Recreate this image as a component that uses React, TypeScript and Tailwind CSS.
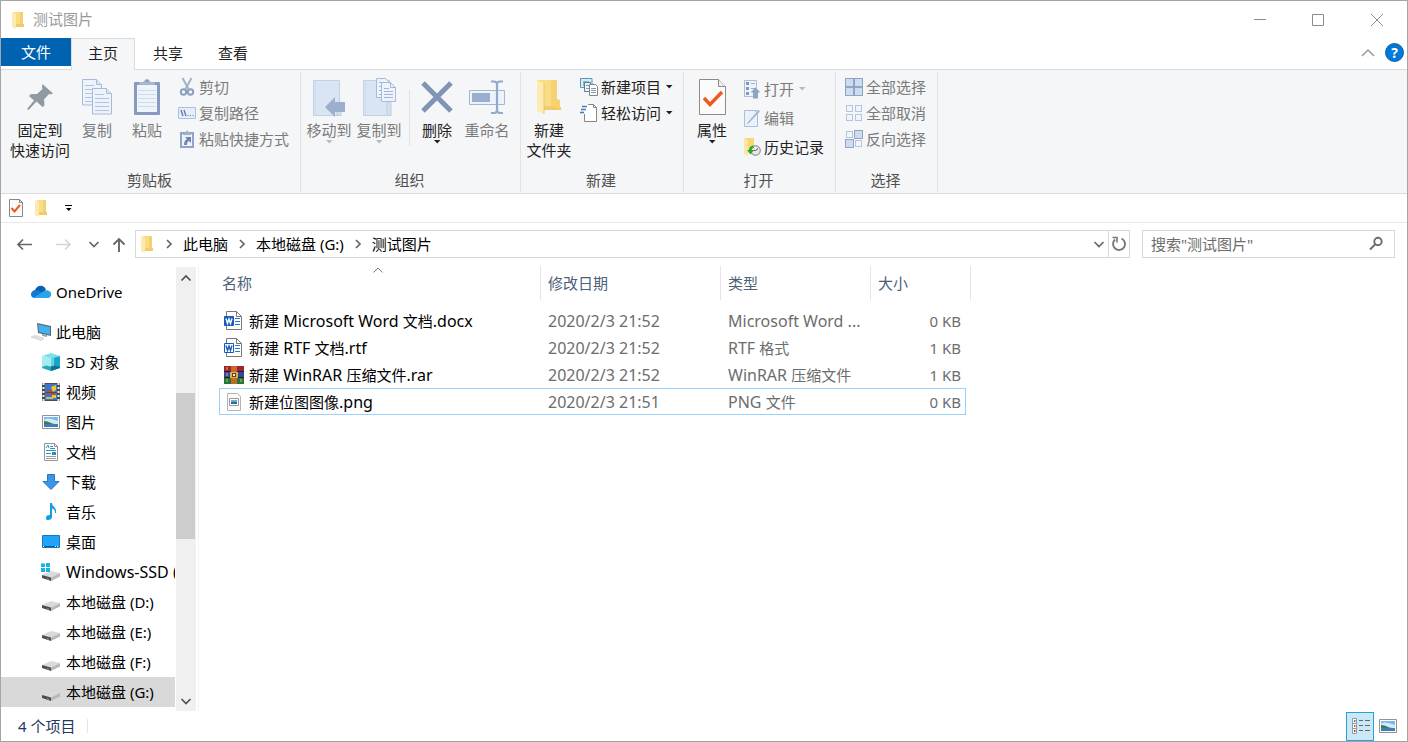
import React from "react";

type Kids = { children: React.ReactNode };
type IconProps = { w: number; h: number; children: React.ReactNode };

function Icon({ w, h, children }: IconProps) {
  return (
    <svg width={w} height={h} viewBox={`0 0 ${w} ${h}`} fill="none" className="shrink-0" aria-hidden="true">
      {children}
    </svg>
  );
}

/* Latin runs are set one size larger than the Chinese text around them. */
function Mixed({ text }: { text: string }) {
  return (
    <span className="whitespace-pre">
      {text.split(/([\x20-\x7e]+)/).map((run, i) =>
        i % 2 ? <span key={i} className="text-[16px] leading-5">{run}</span> : run
      )}
    </span>
  );
}

/* ---------- shared glyphs ---------- */

const FolderIcon = () => (
  <Icon w={14} h={18}>
    <path d="M3 1h9v13H3z" fill="#f9dc84" />
    <path d="M9 1h3v14H9z" fill="#f4d070" />
    <path d="M5 13h8v3H5z" fill="#f2cb66" />
    <path d="M1 1l4 2v15l-4-2z" fill="#fdeab0" />
  </Icon>
);

const BigFolderIcon = () => (
  <Icon w={28} h={38}>
    <path d="M2 2h20v29H2z" fill="#f9dc84" />
    <path d="M16 2h6v28h-6z" fill="#f5d272" />
    <path d="M8 28l18 1v3H8z" fill="#f1cb69" />
    <path d="M22 21l3 1v8h-3z" fill="#f5d272" />
    <path d="M2 2l7 4v30l-7-3z" fill="#fdebb3" />
    <path d="M9 6v30" stroke="#eac76b" />
  </Icon>
);

const Caret = ({ tone = "#222222" }: { tone?: string }) => (
  <Icon w={7} h={4}>
    <path d="M0 0h6.500L3.250 3.500z" fill={tone} />
  </Icon>
);

const CheckPage = () => (
  <Icon w={16} h={20}>
    <path d="M1.500 1.500h10l3 3v14h-13z" fill="#fafafa" stroke="#878787" />
    <path d="M11.500 1.500v3h3" stroke="#878787" />
    <path d="M3.500 10l3 3.500L12 7" stroke="#ee5a1c" strokeWidth="2" />
  </Icon>
);

const Chevron = ({ dir, tone = "#666666" }: { dir: "up" | "down" | "right"; tone?: string }) => (
  <Icon w={12} h={12}>
    <path
      d={dir === "up" ? "M1.500 8.500L6 4l4.500 4.500" : dir === "down" ? "M1.500 4L6 8.500 10.500 4" : "M4 2l4 4-4 4"}
      stroke={tone}
      strokeWidth="1.700"
    />
  </Icon>
);

/* ---------- ribbon icons ---------- */

const PinIcon = () => (
  <Icon w={28} h={28}>
    <path d="M16.500 1L27 10.500l-2.500 1-1.500-.5-5 5.500.5 6-2 1.500-6-5.500L2.500 27 1 26l7-8.500L3 13l2-2h6l5.500-5-.5-2z" fill="#8f9aa3" />
  </Icon>
);

const Sheet = ({ x, y }: { x: number; y: number }) => (
  <g>
    <path d={`M${x + 0.5} ${y + 0.5}h14l5 5v20.500h-19z`} fill="#edf3fc" stroke="#a9b9d6" />
    <path d={`M${x + 14.5} ${y + 0.5}v5h5`} fill="#dbe5f4" stroke="#a9b9d6" />
    <path d={`M${x + 3} ${y + 6.5}h9M${x + 3} ${y + 10.5}h14M${x + 3} ${y + 14.5}h14M${x + 3} ${y + 18.5}h14M${x + 3} ${y + 22.5}h14`} stroke="#b2c3de" />
  </g>
);

const CopyIcon = () => (
  <Icon w={32} h={37}>
    <Sheet x={1} y={0} />
    <Sheet x={11} y={9} />
  </Icon>
);

const ClipboardIcon = () => (
  <Icon w={28} h={38}>
    <rect x="1" y="4" width="26" height="33" rx="1" fill="#879bc0" />
    <path d="M4 7h20v27H4z" fill="#eef4fc" />
    <path d="M5 12.500h18M5 16.500h18M5 20.500h18M5 24.500h18M5 28.500h18" stroke="#cfdbea" />
    <path d="M6 7V4h4c1 0 1.500-3 4-3s3 3 4 3h4v3z" fill="#a8b5cc" />
    <circle cx="14" cy="3" r="1.200" fill="#8797b5" />
  </Icon>
);

const ScissorsIcon = () => (
  <Icon w={18} h={20}>
    <path d="M4.500 1l6 11M13.500 1l-6 11" stroke="#a3b1c8" strokeWidth="2" />
    <circle cx="5.500" cy="15" r="2.700" stroke="#8b9fc0" strokeWidth="2" />
    <circle cx="12.500" cy="15" r="2.700" stroke="#8b9fc0" strokeWidth="2" />
  </Icon>
);

const PathIcon = () => (
  <Icon w={18} h={12}>
    <path d="M.5.5h17v11H.5z" fill="#e6eef9" stroke="#aebfda" />
    <path d="M3 3l2 6M6 3l2 6" stroke="#61789f" strokeWidth="1.300" />
    <path d="M9.500 8.500h1M12 8.500h1M14.500 8.500h1" stroke="#61789f" />
  </Icon>
);

const PasteLinkIcon = () => (
  <Icon w={18} h={20}>
    <path d="M2 3h14v16H2z" fill="#91a4c6" />
    <path d="M4 5h10v12H4z" fill="#edf3fb" />
    <path d="M5 4h2l2-3 2 3h2v2H5z" fill="#a3b1c8" />
    <path d="M7 8h6v6l-2-2c-2 1-2 2-2 4H6c0-3 1-5 3-6z" fill="#6f87b0" />
  </Icon>
);

const Book = () => (
  <g>
    <path d="M1.500 2.500h26v35h-26z" fill="#dae5f4" stroke="#c3d1e6" />
    <path d="M3.500 3v34" stroke="#cfdcee" />
    <path d="M25 26c1-3 4-3 4 0v11.500h-4z" fill="#d3e0f1" stroke="#bccce2" />
  </g>
);

const MoveToIcon = () => (
  <Icon w={34} h={39}>
    <Book />
    <path d="M13 29l10-10v5h10v10H23v5z" fill="#9cafcf" />
  </Icon>
);

const CopyToIcon = () => (
  <Icon w={34} h={39}>
    <Book />
    <path d="M14.500.5h9l4 4v15h-13z" fill="#edf3fc" stroke="#a9b9d6" />
    <path d="M19.500 4.500h9l5 5v14h-14z" fill="#edf3fc" stroke="#a9b9d6" />
    <path d="M28.500 4.500v5h5M22 10.500h5M22 13.500h9M22 16.500h9M22 19.500h9M17 4.500h5M17 8.500h2M17 12.500h2M17 16.500h2" stroke="#a3b5d3" />
  </Icon>
);

const DeleteIcon = () => (
  <Icon w={34} h={34}>
    <path d="M3 3l28 28M31 3L3 31" stroke="#8194b6" strokeWidth="5" />
  </Icon>
);

const RenameIcon = () => (
  <Icon w={38} h={36}>
    <path d="M1.500 11.500h35v14h-35z" fill="#edf3fc" stroke="#a5b6d3" />
    <path d="M4 14h18v9H4z" fill="#9caecd" />
    <path d="M29 4v28M23 2.500h3q3 0 3 3 0-3 3-3h3M23 34h3q3 0 3-3 0 3 3 3h3" stroke="#95a8c9" strokeWidth="2.200" />
  </Icon>
);

const NewItemIcon = () => (
  <Icon w={18} h={18}>
    <path d="M.5.500h11.500v9H.5z" fill="#d5edf8" stroke="#5b97b5" />
    <path d="M3 3h6v5H3z" fill="#8fb9ac" />
    <path d="M4.500 4.500h6v9h-6z" fill="#eef4f8" stroke="#5d7c91" />
    <path d="M9.500 6.500h6l2 2v9h-8z" fill="#fff" stroke="#7d858c" />
    <path d="M11 10.500h5M11 12.500h5M11 14.500h5M6 7.500h3M6 10.500h3" stroke="#8e9aa3" />
  </Icon>
);

const EasyAccessIcon = () => (
  <Icon w={18} h={20}>
    <path d="M4.500 1.500h9l3 3v14h-12z" fill="#fff" />
    <path d="M8 1.500h5.500l3 3v14h-12V11M13.500 1.500v3h3" stroke="#878787" />
    <path d="M2 3.500h5M1 6.500h5M0 9.500h4" stroke="#3c7fbb" strokeWidth="1.400" />
  </Icon>
);

const PropertiesIcon = () => (
  <Icon w={29} h={38}>
    <path d="M1.500 1.500h19l7 7v28h-26z" fill="#fbfbfb" stroke="#8b8b8b" />
    <path d="M20.500 1.500v7h7" fill="#eee" stroke="#8b8b8b" />
    <path d="M6 20l6 6.500L24 14" stroke="#ee5a1c" strokeWidth="3.400" />
  </Icon>
);

const OpenIcon = () => (
  <Icon w={18} h={20}>
    <path d="M1.500 1.500h12v16h-12z" fill="#edf3fb" stroke="#aebdd6" />
    <path d="M3 3h3v3H3zM3 8h3v3H3zM3 13h3v3H3z" fill="#8398bd" />
    <path d="M8 4.500h4M8 9.500h4" stroke="#9cafcd" />
    <path d="M12.500 8.500l5 5H15v6h-5v-6H7.500z" fill="#8fa3c6" />
  </Icon>
);

const EditIcon = () => (
  <Icon w={18} h={20}>
    <path d="M1.500 2.500h13v16h-13z" fill="#e9f1fb" stroke="#aebdd6" />
    <path d="M15.500 2l1.500 1.500L6 15l-2.500 1.500L5 14z" fill="#a4b6d2" />
    <path d="M11.500 2.500l3 3" stroke="#aebdd6" />
  </Icon>
);

const HistoryIcon = () => (
  <Icon w={18} h={20}>
    <path d="M2 1h9v15H2z" fill="#f7d678" />
    <path d="M1 1l4 2v16l-4-2z" fill="#fde7a3" />
    <circle cx="12.500" cy="13.500" r="4.800" fill="#e5e8e6" stroke="#777d78" />
    <path d="M12.500 13.500l2.500-2M12.500 13.500h-2" stroke="#555" />
    <path d="M10 8.500c-3 .5-4 2.500-4 4.500H4l3.500 4.500L11 13H9c0-1.500.5-2 2-2.500z" fill="#2ea836" />
  </Icon>
);

const Cells = ({ solid }: { solid: boolean[] }) => (
  <Icon w={18} h={18}>
    {solid.map((on, i) => (
      <rect
        key={i}
        x={(i % 2) * 9 + (on ? 0.5 : 1.5)}
        y={(i > 1 ? 9 : 0) + (on ? 0.5 : 1.5)}
        width={on ? 8 : 6}
        height={on ? 8 : 6}
        fill={on ? "#cfdcee" : "#f0f5fc"}
        stroke={on ? "#8fa4c6" : "#b6c5de"}
      />
    ))}
  </Icon>
);

/* ---------- navigation icons ---------- */

const OneDriveIcon = () => (
  <Icon w={22} h={16}>
    <path d="M5 6C7 1 14 0 16 6l-5 4z" fill="#0a5fb4" />
    <path d="M5 14c-6 0-5-8 1-8 3 0 5 2 8 4l-4 4z" fill="#1378d1" />
    <path d="M4 13.500L14 7c4-2 8 1 7 4.500-.5 1.500-1.500 2.500-3 2.500H5z" fill="#2aa4ea" />
  </Icon>
);

const ComputerIcon = () => (
  <Icon w={22} h={20}>
    <path d="M7 1l14 3v10L8 11z" fill="#5b6770" />
    <path d="M8 2.500l12 2.500v7.500L9 10z" fill="#3fb2f5" />
    <path d="M12 12l5 1v2l-5-1z" fill="#9da5ab" />
    <path d="M1 15l4-1.500 9 3-3 2z" fill="#e0e3e5" stroke="#b9bec2" strokeWidth=".5" />
  </Icon>
);

const CubeIcon = () => (
  <Icon w={20} h={20}>
    <path d="M10 1l9 3-9 2.500L1 4z" fill="#7fdfe9" />
    <path d="M1 4l9 2.500V19l-9-3z" fill="#a3ecf2" />
    <path d="M19 4l-9 2.500V19l9-3z" fill="#17a5d0" />
    <path d="M10 6.500l3-1v9l-3 .5z" fill="#64d2e0" />
    <path d="M1 15l4-1.500 5 1V19l-9-3z" fill="#2aa9bd" />
    <path d="M10 14.500l4-1 5 1.500v1l-9 3z" fill="#126f93" />
  </Icon>
);

const FilmIcon = () => (
  <Icon w={20} h={20}>
    <path d="M1 1h18v18H1z" fill="#4a4a4a" />
    <path d="M4 2h12v8H4zM4 11h12v7H4z" fill="#3b76cc" />
    <path d="M10 5l5-2v5l-3 2zM11 13h4v3h-4z" fill="#f0c52d" />
    <path d="M5 8h6v2H5zM10 11h4v2h-4z" fill="#c84236" />
    <path d="M5 15h7v2H5z" fill="#d8bd42" />
    <path d="M2.500 1v18M17.500 1v18" stroke="#f1f1f1" strokeWidth="2" strokeDasharray="2 2" />
  </Icon>
);

const PictureIcon = () => (
  <Icon w={20} h={16}>
    <path d="M1.500 1.500h17v13h-17z" fill="#fff" stroke="#929292" />
    <path d="M3 3h14v10H3z" fill="#78b8eb" />
    <path d="M3 6c4-3 7-1 14 1v3H3z" fill="#d2eaf5" />
    <path d="M3 7c5 0 7 3 11 3H3z" fill="#3d775e" />
    <path d="M3 10h14v3H3z" fill="#3e7fb5" />
  </Icon>
);

const DocumentIcon = () => (
  <Icon w={20} h={20}>
    <path d="M3.500 1.500h10l3 3v14h-13z" fill="#fff" stroke="#949494" />
    <path d="M13.500 1.500v3h3" stroke="#949494" />
    <path d="M5 6l2-3 1 3M9 4.500h3M9 6.500h5M5 8.500h10M5 11.500h5" stroke="#2995cb" />
    <path d="M11 10h4v3h-4z" fill="#3983b8" />
    <path d="M5 14.500h10M5 16.500h10" stroke="#9a9a9a" />
  </Icon>
);

const DownloadIcon = () => (
  <Icon w={20} h={20}>
    <path d="M6.500 2.500h7v7h4.500L10 17.500 2 9.500h4.500z" fill="#3e95e5" stroke="#2876c0" />
  </Icon>
);

const MusicIcon = () => (
  <Icon w={20} h={20}>
    <path d="M9 1h2c0 4 5 4 4 10h-1c0-3-1-4-3-4.500V15c0 4-7 4-6 .5C5.500 13 8 13 9 13z" fill="#149bea" />
  </Icon>
);

const DesktopIcon = () => (
  <Icon w={20} h={16}>
    <path d="M1.500 1.500h17v12h-17z" fill="#22a3f5" stroke="#1479c3" />
    <path d="M3 12.500h14" stroke="#0c558e" />
    <path d="M2 12.500h1M14 12.500h1M16 12.500h1" stroke="#fff" />
  </Icon>
);

const DriveIcon = ({ windows = false }: { windows?: boolean }) => (
  <Icon w={20} h={20}>
    <path d="M1 13l9-4 9 2-9 4.500z" fill="#dadada" />
    <path d="M19 11v3.500L10 19v-3.500z" fill="#b9b9b9" />
    <path d="M1 13l9 2.500V19l-9-3z" fill="#4d4d4d" />
    <path d="M6 16l2 .7v1L6 17z" fill="#38d447" />
    {windows && <path d="M0 1.500h4v3.500H0zM5 1h4v4H5zM0 6h4v4H0zM5 6h4v4H5z" fill="#18b2e9" />}
  </Icon>
);

/* ---------- file icons ---------- */

const WordIcon = ({ outlined = false }: { outlined?: boolean }) => (
  <Icon w={20} h={20}>
    <path d="M2.500.500v18h15V5.500l-5-5z" fill="#fff" stroke="#777" />
    <path d="M12.500.500v5h5" stroke="#777" />
    <path d="M11 7.500h5M11 10.500h5M11 13.500h5" stroke="#2d78c9" />
    <path d="M.500 5.500h9v9h-9z" fill={outlined ? "#fff" : "#185abd"} stroke="#185abd" />
    <path d="M2 7.500l1.500 5L5 8l1.500 4.500 1.500-5" stroke={outlined ? "#185abd" : "#fff"} strokeWidth="1.400" />
  </Icon>
);

const RarIcon = () => (
  <Icon w={20} h={20}>
    <path d="M0 1h20v6H0z" fill="#a32230" />
    <path d="M0 7h20v6H0z" fill="#37459f" />
    <path d="M0 13h20v6H0z" fill="#21783a" />
    <path d="M0 6.500h20M0 12.500h20" stroke="#271d2f" />
    <path d="M7 1h6v18H7z" fill="#c06c2d" />
    <path d="M6 7h8v6H6z" fill="#e0ad4b" />
    <path d="M8 8h4v4H8z" fill="#653d25" />
    <path d="M9 9h2v2H9z" fill="#fff0c1" />
    <path d="M3 2v3M3 8v3M3 14v3M17 14v3" stroke="#e4bb55" />
  </Icon>
);

const ImageFileIcon = () => (
  <Icon w={20} h={20}>
    <path d="M3.500 1.500h10l3 3v14h-13z" fill="#fafafa" stroke="#b5b5b5" />
    <path d="M5.500 6.500h9v7h-9z" fill="#fff" stroke="#999" />
    <path d="M7 8h6v4H7z" fill="#68a9dc" />
    <path d="M7 10h6v2H7z" fill="#346c8c" />
  </Icon>
);

/* ---------- ribbon ---------- */

function Group({ label, width, children }: Kids & { label: string; width: string }) {
  return (
    <section aria-label={label} className={`flex flex-col border-r border-[#e0e2e4] ${width}`}>
      <div className="flex h-[94px] pt-0.5">{children}</div>
      <div className="pt-1 pr-0.5 text-center leading-5 text-[#505050]">{label}</div>
    </section>
  );
}

type BigProps = { icon: React.ReactNode; lines: string[]; off?: boolean; drop?: boolean; width?: string };
function Big({ icon, lines, off, drop, width = "w-[50px]" }: BigProps) {
  return (
    <button disabled={off} className={`flex shrink-0 flex-col items-center ${width} ${off ? "text-[#7b7b7b]" : "text-[#222222]"}`}>
      <span className="flex h-[46px] items-center">{icon}</span>
      {lines.map((line) => (
        <span key={line} className="leading-5 whitespace-nowrap">{line}</span>
      ))}
      {drop && <Caret tone={off ? "#b9b9b9" : "#222222"} />}
    </button>
  );
}

function Small({ icon, label, off, drop }: { icon: React.ReactNode; label: string; off?: boolean; drop?: boolean }) {
  return (
    <button disabled={off} className={`flex items-center gap-[3px] leading-5 whitespace-nowrap ${off ? "text-[#7b7b7b]" : "text-[#222222]"}`}>
      <span className="flex w-[18px] justify-center">{icon}</span>
      {label}
      {drop && <span className="pl-0.5"><Caret tone={off ? "#b9b9b9" : "#222222"} /></span>}
    </button>
  );
}

const Stack = ({ children }: Kids) => <div className="flex h-[78px] flex-col justify-around">{children}</div>;

function Ribbon() {
  return (
    <div className="flex h-[124px] border-b border-[#dadbdc] bg-[#f5f6f7] pt-0.5 pb-px">
      <Group label="剪贴板" width="w-[300px]">
        <div className="flex pl-[7px]">
          <Big icon={<PinIcon />} lines={["固定到", "快速访问"]} width="w-16" />
          <Big icon={<CopyIcon />} lines={["复制"]} off />
          <Big icon={<ClipboardIcon />} lines={["粘贴"]} off />
        </div>
        <div className="pl-1.5">
          <Stack>
            <Small icon={<ScissorsIcon />} label="剪切" off />
            <Small icon={<PathIcon />} label="复制路径" off />
            <Small icon={<PasteLinkIcon />} label="粘贴快捷方式" off />
          </Stack>
        </div>
      </Group>
      <Group label="组织" width="w-[220px]">
        <div className="flex pl-[3px]">
          <Big icon={<MoveToIcon />} lines={["移动到"]} off drop />
          <Big icon={<CopyToIcon />} lines={["复制到"]} off drop />
        </div>
        <div className="mt-4 mr-0.5 ml-[5px] h-14 w-px bg-[#e0e2e4]" />
        <Big icon={<DeleteIcon />} lines={["删除"]} drop />
        <Big icon={<RenameIcon />} lines={["重命名"]} off />
      </Group>
      <Group label="新建" width="w-[163px]">
        <div className="flex pl-[3px]">
          <Big icon={<BigFolderIcon />} lines={["新建", "文件夹"]} />
        </div>
        <div className="flex h-[52px] flex-col justify-around pl-1.5">
          <Small icon={<NewItemIcon />} label="新建项目" drop />
          <Small icon={<EasyAccessIcon />} label="轻松访问" drop />
        </div>
      </Group>
      <Group label="打开" width="w-[152px]">
        <div className="flex pl-[3px]">
          <Big icon={<PropertiesIcon />} lines={["属性"]} drop />
        </div>
        <div className="flex h-[88px] flex-col justify-around pl-1.5">
          <Small icon={<OpenIcon />} label="打开" off drop />
          <Small icon={<EditIcon />} label="编辑" off />
          <Small icon={<HistoryIcon />} label="历史记录" />
        </div>
      </Group>
      <Group label="选择" width="w-[102px]">
        <div className="pl-[9px]">
          <Stack>
            <Small icon={<Cells solid={[true, true, true, true]} />} label="全部选择" off />
            <Small icon={<Cells solid={[false, false, false, false]} />} label="全部取消" off />
            <Small icon={<Cells solid={[false, true, true, false]} />} label="反向选择" off />
          </Stack>
        </div>
      </Group>
    </div>
  );
}

/* ---------- window chrome ---------- */

function TitleBar() {
  return (
    <header className="flex h-[37px] items-center pl-2.5">
      <FolderIcon />
      <h1 className="pl-2 text-[#999999]">测试图片</h1>
      <div className="ml-auto flex text-[#8c8c8c]">
        <button aria-label="最小化" className="flex w-[58px] justify-center">
          <Icon w={14} h={14}><path d="M1 6.500h12" stroke="currentColor" /></Icon>
        </button>
        <button aria-label="最大化" className="flex w-[58px] justify-center">
          <Icon w={14} h={14}><path d="M1.500 1.500h11v11h-11z" stroke="currentColor" /></Icon>
        </button>
        <button aria-label="关闭" className="flex w-[60px] justify-center">
          <Icon w={14} h={14}><path d="M1 1l12 12M13 1L1 13" stroke="currentColor" /></Icon>
        </button>
      </div>
    </header>
  );
}

function Tabs() {
  return (
    <nav className="flex h-8 text-[#222222]">
      <div className="w-[70px] border-b border-[#dadbdc]">
        <button className="h-7 w-full bg-[#0063b1] text-white">文件</button>
      </div>
      <button className="w-16 border-x border-t border-[#dadbdc] bg-[#f5f6f7] pb-0.5">主页</button>
      <button className="w-[65px] border-b border-[#dadbdc] pl-px">共享</button>
      <button className="w-[65px] border-b border-[#dadbdc] pl-px">查看</button>
      <div className="flex flex-1 items-center justify-end gap-2.5 border-b border-[#dadbdc] pr-[3px] pb-0.5">
        <button aria-label="折叠功能区">
          <Icon w={14} h={10}><path d="M1 8l6-6 6 6" stroke="#999999" strokeWidth="1.500" /></Icon>
        </button>
        <button aria-label="帮助" className="flex size-[19px] items-center justify-center rounded-full border border-[#0863ad] bg-[#0078d7] text-sm font-bold text-white">?</button>
      </div>
    </nav>
  );
}

function QuickAccess() {
  return (
    <div className="flex h-[29px] items-center border-b border-[#e8e8e8] pl-[7px]">
      <button aria-label="属性"><CheckPage /></button>
      <button aria-label="新建文件夹" className="pl-2.5"><FolderIcon /></button>
      <button aria-label="自定义快速访问工具栏" className="pl-[17px]">
        <Icon w={8} h={8}><path d="M0 1.500h7" stroke="#000" /><path d="M1 4h5.500L3.750 7z" fill="#000" /></Icon>
      </button>
    </div>
  );
}

function AddressRow() {
  return (
    <div className="flex pt-[7px] pr-3 pb-2 pl-3.5">
      <div className="flex h-7 w-[120px] items-center">
        <button aria-label="后退">
          <Icon w={20} h={16}><path d="M17 8.500H3M8 3.500l-5 5 5 5" stroke="#666666" strokeWidth="1.700" /></Icon>
        </button>
        <button aria-label="前进" disabled className="pl-[19px]">
          <Icon w={20} h={16}><path d="M2 8.500h14M11 3.500l5 5-5 5" stroke="#d5d5d5" strokeWidth="1.700" /></Icon>
        </button>
        <button aria-label="最近浏览的位置" className="pl-3.5"><Chevron dir="down" /></button>
        <button aria-label="上移" className="pl-[11px]">
          <Icon w={16} h={18}><path d="M8 17V4M2.500 9.500L8 4l5.500 5.500" stroke="#666666" strokeWidth="1.900" /></Icon>
        </button>
      </div>
      <div className="flex h-7 flex-1 items-center border border-[#d9d9d9]">
        <div className="flex flex-1 items-center gap-2 pl-1">
          <FolderIcon />
          <span className="flex pl-px"><Chevron dir="right" /></span>
          <a href="#pc">此电脑</a>
          <Chevron dir="right" />
          <a href="#drive-g">本地磁盘 (G:)</a>
          <Chevron dir="right" />
          <a href="#folder">测试图片</a>
        </div>
        <button aria-label="以前的位置" className="pr-[3px]"><Chevron dir="down" /></button>
        <button aria-label="刷新" className="flex h-full w-[21px] items-center justify-center border-l border-[#d9d9d9]">
          <Icon w={16} h={16}>
            <path d="M10.500 2.500A6 6 0 1 1 4 3.500" stroke="#777" strokeWidth="1.900" />
            <path d="M1.500 1.500H6v5" stroke="#777" strokeWidth="1.600" />
          </Icon>
        </button>
      </div>
      <label className="ml-3 flex h-7 w-[253px] items-center border border-[#d9d9d9] pr-2.5 pl-2">
        <input type="search" aria-label="搜索" placeholder={'搜索"测试图片"'} className="min-w-0 flex-1 outline-none placeholder:text-[#6d6d6d]" />
        <Icon w={16} h={16}>
          <circle cx="10" cy="5.500" r="3.700" stroke="#6d6d6d" strokeWidth="1.900" />
          <path d="M7.500 8L2 13.500" stroke="#6d6d6d" strokeWidth="2" />
        </Icon>
      </label>
    </div>
  );
}

/* ---------- body ---------- */

const places: { name: string; icon: React.ReactNode; current?: boolean }[] = [
  { name: "3D 对象", icon: <CubeIcon /> },
  { name: "视频", icon: <FilmIcon /> },
  { name: "图片", icon: <PictureIcon /> },
  { name: "文档", icon: <DocumentIcon /> },
  { name: "下载", icon: <DownloadIcon /> },
  { name: "音乐", icon: <MusicIcon /> },
  { name: "桌面", icon: <DesktopIcon /> },
  { name: "Windows-SSD (", icon: <DriveIcon windows /> },
  { name: "本地磁盘 (D:)", icon: <DriveIcon /> },
  { name: "本地磁盘 (E:)", icon: <DriveIcon /> },
  { name: "本地磁盘 (F:)", icon: <DriveIcon /> },
  { name: "本地磁盘 (G:)", icon: <DriveIcon />, current: true },
];

function Sidebar() {
  return (
    <aside className="flex w-[198px] shrink-0 border-r border-[#f3f3f3]">
      <nav className="w-[174px] overflow-hidden pt-[11px] whitespace-nowrap">
        <a href="#onedrive" className="mb-2.5 flex h-[30px] items-center gap-1 pl-[29px]"><OneDriveIcon />OneDrive</a>
        <a href="#pc" className="flex h-[30px] items-center gap-1 pl-[29px]"><ComputerIcon />此电脑</a>
        {places.map((p) => (
          <a key={p.name} href={`#${p.name}`} className={`flex h-[30px] items-center gap-[5px] pl-10 ${p.current ? "bg-[#d9d9d9]" : ""}`}>
            {p.icon}
            {p.name.startsWith("Windows") ? <Mixed text={p.name} /> : p.name}
          </a>
        ))}
      </nav>
      <div className="mt-px ml-px flex w-5 flex-col bg-[#f0f0f0]">
        <button aria-label="向上滚动" className="flex h-[22px] items-center justify-center"><Chevron dir="up" tone="#505050" /></button>
        <div className="flex flex-1 flex-col pr-px">
          <div className="h-[104px]" />
          <div className="h-[146px] bg-[#cdcdcd]" />
        </div>
        <button aria-label="向下滚动" className="flex h-5 items-center justify-center"><Chevron dir="down" tone="#505050" /></button>
      </div>
    </aside>
  );
}

const files = [
  { name: "新建 Microsoft Word 文档.docx", date: "2020/2/3 21:52", type: "Microsoft Word ...", size: "0 KB", icon: <WordIcon /> },
  { name: "新建 RTF 文档.rtf", date: "2020/2/3 21:52", type: "RTF 格式", size: "1 KB", icon: <WordIcon outlined /> },
  { name: "新建 WinRAR 压缩文件.rar", date: "2020/2/3 21:52", type: "WinRAR 压缩文件", size: "1 KB", icon: <RarIcon /> },
  { name: "新建位图图像.png", date: "2020/2/3 21:51", type: "PNG 文件", size: "0 KB", icon: <ImageFileIcon />, focused: true },
];

function FileTable() {
  return (
    <div className="ml-5">
      <table className="w-[752px] table-fixed border-separate border-spacing-0 text-left">
        <colgroup>
          <col className="w-[322px]" />
          <col className="w-[180px]" />
          <col className="w-[150px]" />
          <col className="w-[95px]" />
          <col className="w-[5px]" />
        </colgroup>
        <thead className="text-[#4c607a]">
          <tr className="h-[34px]">
            <th scope="col" className="relative border-r border-[#e5e5e5] pl-[3px] font-normal">
              名称
              <span className="absolute top-0 left-[153px]">
                <Icon w={12} h={8}><path d="M1.500 6.500l4.500-4.500 4.500 4.500" stroke="#777777" /></Icon>
              </span>
            </th>
            <th scope="col" className="border-r border-[#e5e5e5] pl-[7px] font-normal">修改日期</th>
            <th scope="col" className="border-r border-[#e5e5e5] pl-[7px] font-normal">类型</th>
            <th scope="col" colSpan={2} className="border-r border-[#e5e5e5] pl-[7px] font-normal">大小</th>
          </tr>
        </thead>
        <tbody className="text-[#6d6d6d]">
          <tr aria-hidden="true" className="h-[7px]"><td colSpan={5} /></tr>
          {files.map((f) => {
            const edge = f.focused ? "border-y border-[#99d1ff]" : "";
            return (
              <tr key={f.name} className="h-[27px] leading-5 whitespace-nowrap">
                <td className={`p-0 text-black ${edge} ${f.focused ? "border-l pl-1" : "pl-[5px]"}`}>
                  <span className="flex items-center gap-[5px]">{f.icon}<Mixed text={f.name} /></span>
                </td>
                <td className={`p-0 pl-[7px] ${edge}`}><Mixed text={f.date} /></td>
                <td className={`p-0 pl-[7px] ${edge}`}><Mixed text={f.type} /></td>
                <td className={`p-0 text-right ${edge} ${f.focused ? "border-r pr-1" : "pr-[5px]"}`}>{f.size}</td>
                <td className="p-0" />
              </tr>
            );
          })}
        </tbody>
      </table>
    </div>
  );
}

function StatusBar() {
  return (
    <footer className="flex h-[30px] items-center pr-[9px] pl-[17px] text-[#1e395b]">
      <span>4 个项目</span>
      <span className="ml-3 h-3.5 w-px bg-[#e5e5e5]" />
      <button aria-label="详细信息" className="ml-auto flex h-[29px] w-7 items-center justify-center border border-[#26a0da] bg-[#cbe8f6]">
        <Icon w={19} h={17}>
          <path d="M1.500.500h4v5h-4zM1.500 5.500h4v5h-4zM1.500 10.500h4v5h-4z" fill="#fff" stroke="#999" />
          <path d="M3 2h1.500v2H3z" fill="#2789bf" />
          <path d="M3 7h1.500v2H3z" fill="#b8673c" />
          <path d="M3 12h1.500v2H3z" fill="#c52a2a" />
          <path d="M8 2.500h4M14 2.500h5M8 7.500h4M14 7.500h5M8 12.500h4M14 12.500h5" stroke="#666" />
        </Icon>
      </button>
      <button aria-label="大图标" className="ml-1"><PictureIcon /></button>
    </footer>
  );
}

export default function App() {
  return (
    <div className="flex min-h-screen flex-col border border-[#a5a5a5] bg-white font-['Noto_Sans','Noto_Sans_CJK_SC',sans-serif] text-[15px] text-black">
      <TitleBar />
      <Tabs />
      <Ribbon />
      <QuickAccess />
      <AddressRow />
      <main className="flex flex-1">
        <Sidebar />
        <FileTable />
      </main>
      <StatusBar />
    </div>
  );
}
